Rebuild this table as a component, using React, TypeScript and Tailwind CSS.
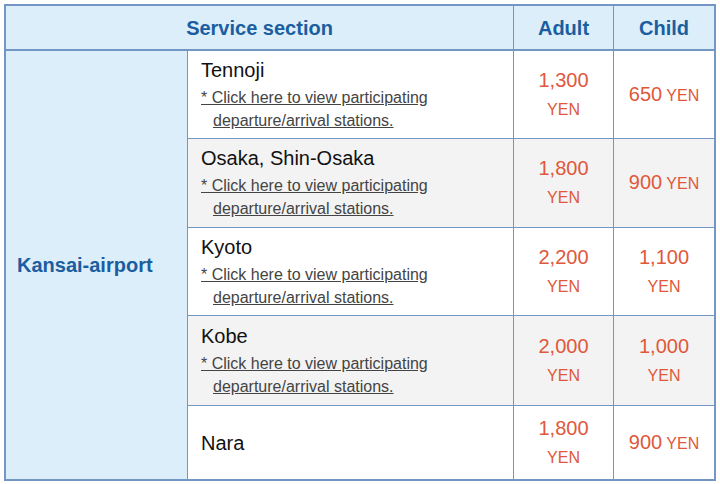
import React from "react";

type Row = {
  name: string;
  link: boolean;
  adult: string;
  child: string;
  childWrap: boolean;
  gray: boolean;
  h: string;
};

const rows: Row[] = [
  { name: "Tennoji", link: true, adult: "1,300", child: "650", childWrap: false, gray: false, h: "h-[88px]" },
  { name: "Osaka, Shin-Osaka", link: true, adult: "1,800", child: "900", childWrap: false, gray: true, h: "h-[89px]" },
  { name: "Kyoto", link: true, adult: "2,200", child: "1,100", childWrap: true, gray: false, h: "h-[88px]" },
  { name: "Kobe", link: true, adult: "2,000", child: "1,000", childWrap: true, gray: true, h: "h-[90px]" },
  { name: "Nara", link: false, adult: "1,800", child: "900", childWrap: false, gray: false, h: "h-[73px]" },
];

function Price({ value, wrap }: { value: string; wrap: boolean }) {
  if (wrap) {
    return (
      <div className="flex flex-col items-center text-[#e0583b] leading-[30px]">
        <span className="text-[20px]">{value}</span>
        <span className="text-[16px]">YEN</span>
      </div>
    );
  }
  return (
    <div className="text-[#e0583b] leading-[30px] whitespace-nowrap">
      <span className="text-[20px]">{value}</span>
      <span className="text-[16px]"> YEN</span>
    </div>
  );
}

export default function App() {
  return (
    <div
      className="w-[720px] h-[484px] bg-white pt-1 pl-1"
      style={{ fontFamily: '"Liberation Sans", Arial, sans-serif' }}
    >
      <div className="w-[712px] h-[477px] border-2 border-[#7197c2] flex flex-col">
        {/* Header */}
        <div className="flex h-[45px] border-b-2 border-[#7197c2] bg-[#dceefa] text-[#1b5e9f] font-bold text-[20px]">
          <div className="w-[508px] border-r border-[#7197c2] flex items-center justify-center">
            Service section
          </div>
          <div className="w-[100px] border-r border-[#7197c2] flex items-center justify-center">
            Adult
          </div>
          <div className="w-[100px] flex items-center justify-center">Child</div>
        </div>
        {/* Body */}
        <div className="flex flex-1">
          <div className="w-[182px] border-r border-[#7197c2] bg-[#dceefa] flex items-center pl-[11px] text-[#1b5e9f] font-bold text-[20px]">
            Kansai-airport
          </div>
          <div className="flex flex-col w-[526px]">
            {rows.map((r, i) => (
              <div
                key={r.name}
                className={`flex ${r.h} ${i < rows.length - 1 ? "border-b border-[#7197c2]" : ""} ${
                  r.gray ? "bg-[#f3f3f3]" : "bg-white"
                }`}
              >
                <div className="w-[326px] border-r border-[#7197c2] flex flex-col justify-center pl-[13px]">
                  <div className="text-[20px] leading-[24px] text-[#111]">{r.name}</div>
                  {r.link && (
                    <div className="mt-[4px] text-[16px] leading-[23px] text-[#444] underline pl-[12px] -indent-[12px] w-[250px]">
                      * Click here to view participating departure/arrival stations.
                    </div>
                  )}
                </div>
                <div className="w-[100px] border-r border-[#7197c2] flex items-center justify-center">
                  <Price value={r.adult} wrap={true} />
                </div>
                <div className="w-[100px] flex items-center justify-center">
                  <Price value={r.child} wrap={r.childWrap} />
                </div>
              </div>
            ))}
          </div>
        </div>
      </div>
    </div>
  );
}
